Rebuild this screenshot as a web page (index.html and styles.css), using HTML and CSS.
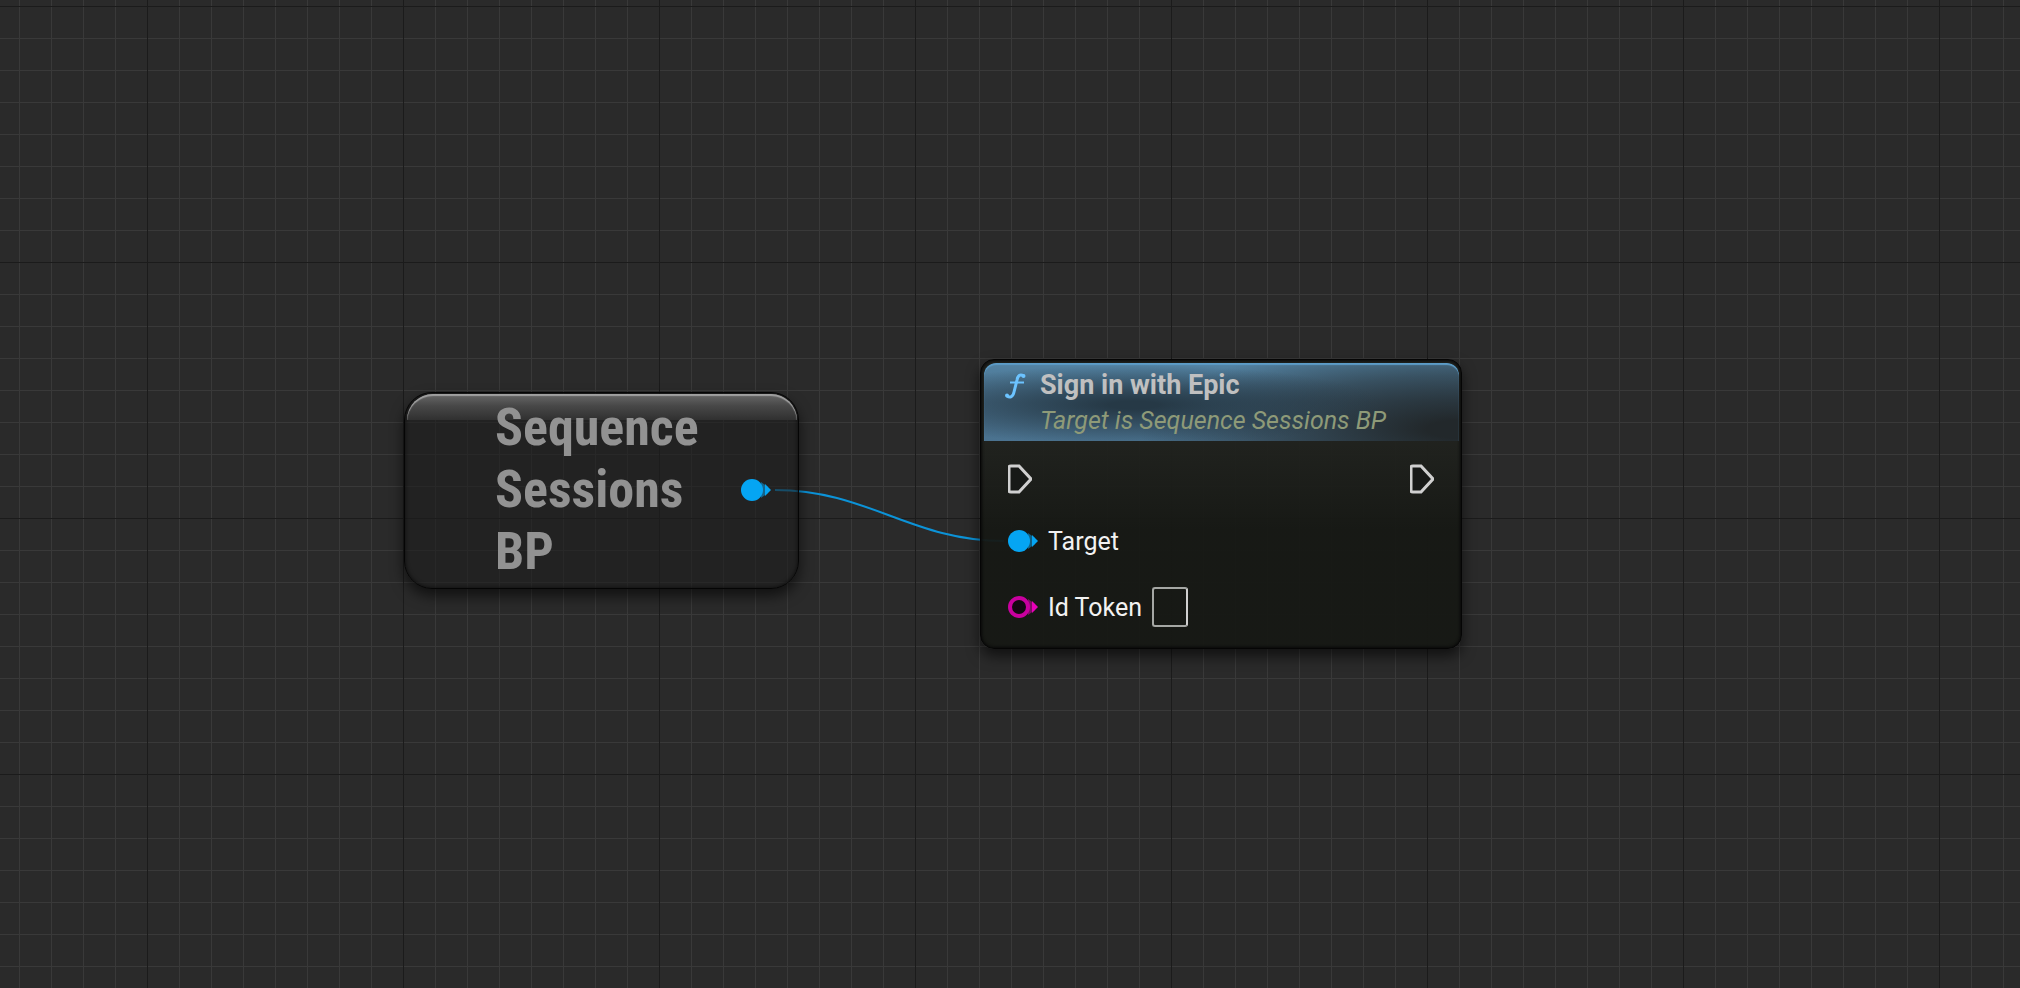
FILE: index.html
```html
<!DOCTYPE html>
<html lang="en">
  <head>
    <meta charset="UTF-8" />
    <meta name="viewport" content="width=device-width, initial-scale=1.0" />
    <title>Blueprint Graph</title>
    <link rel="stylesheet" href="styles.css">
  </head>
  <body>
    <main class="graph">
      <svg class="wires">
        <path d="M775 490 C 868 490, 911 541, 1004 541" />
      </svg>

      <section class="node node-variable">
        <h2 class="variable-name">Sequence Sessions BP</h2>
        <svg class="pin pin-object" width="30" height="22" viewBox="0 0 30 22">
          <circle cx="11" cy="11" r="11" />
          <path d="M20 3 L27 8 V14 L20 19 Z" opacity="0.5" />
          <path d="M24 5 L30 11 L24 17 Z" />
        </svg>
      </section>

      <section class="node node-function">
        <header class="node-header">
          <svg class="icon-function" width="22" height="26" viewBox="0 0 22 26">
            <path class="stem" d="M19 3 C15 1 13 2 12 7 L9 19 C8 24 5 25 2 23" />
            <path class="bar" d="M5 9.500 H19" />
            <circle cx="18.500" cy="3" r="2" />
            <circle cx="2" cy="22.500" r="2" />
          </svg>
          <div>
            <h2 class="title">Sign in with Epic</h2>
            <p class="subtitle">Target is Sequence Sessions BP</p>
          </div>
        </header>
        <div class="pins">
          <div class="row row-exec">
            <svg class="pin pin-exec" width="24" height="30" viewBox="0 0 24 30">
              <path d="M1 3 Q1 2 3 2 H11 L23 15 L11 28 H3 Q1 28 1 27 Z" />
            </svg>
            <svg class="pin pin-exec" width="24" height="30" viewBox="0 0 24 30">
              <path d="M1 3 Q1 2 3 2 H11 L23 15 L11 28 H3 Q1 28 1 27 Z" />
            </svg>
          </div>
          <div class="row">
            <svg class="pin pin-object" width="30" height="22" viewBox="0 0 30 22">
              <circle cx="11" cy="11" r="11" />
              <path d="M20 3 L27 8 V14 L20 19 Z" opacity="0.5" />
              <path d="M24 5 L30 11 L24 17 Z" />
            </svg>
            <span>Target</span>
          </div>
          <div class="row">
            <svg class="pin pin-string" width="30" height="22" viewBox="0 0 30 22">
              <path d="M20 3 L27 8 V14 L20 19 Z" opacity="0.5" />
              <circle cx="11" cy="11" r="9" />
              <path d="M24 5 L30 11 L24 17 Z" />
            </svg>
            <label for="id-token">Id Token</label>
            <input class="token-input" id="id-token" type="text" />
          </div>
        </div>
      </section>
    </main>
  </body>
</html>
```

FILE: styles.css
```css
* {
  box-sizing: border-box;
}
body {
  margin: 0;
  background-color: #2a2a2a;
  font-family: Roboto, "Liberation Sans", sans-serif;
}
h2,
p {
  margin: 0;
}

/* canvas: major lines every 256px, minor lines every 32px */
.graph {
  position: relative;
  min-height: 100vh;
  overflow: hidden;
  background-image:
    linear-gradient(to right, #1b1b1b 1px, transparent 1px),
    linear-gradient(to bottom, #1b1b1b 1px, transparent 1px),
    linear-gradient(to right, #393939 1px, transparent 1px),
    linear-gradient(to bottom, #393939 1px, transparent 1px);
  background-size: 256px 256px, 256px 256px, 32px 32px, 32px 32px;
  background-position: 147px 6px, 147px 6px, 19px 6px, 19px 6px;
}
.wires {
  position: absolute;
  left: 0;
  top: 0;
  width: 100%;
  height: 100%;
}
.wires path {
  fill: none;
  stroke: #0c93d8;
  stroke-width: 2;
}

.node {
  position: absolute;
  border: 1px solid #050505;
}
.node-variable {
  left: 404px;
  top: 392px;
  width: 395px;
  display: flex;
  align-items: center;
  justify-content: space-between;
  padding: 4px 27px 5px 90px;
  border-radius: 28px;
  background-color: rgba(30, 30, 30, 0.6);
  box-shadow: 0 7px 14px rgba(0, 0, 0, 0.6), inset 0 0 4px rgba(0, 0, 0, 0.7);
}
/* glossy top edge */
.node-variable::before {
  content: "";
  position: absolute;
  left: 2px;
  right: 1px;
  top: 1px;
  height: 26px;
  border-radius: 26px 26px 0 0;
  background: linear-gradient(#686868, #484848 45%, #303030);
  box-shadow: inset 0 2px 1px #a0a0a0;
}
.variable-name {
  position: relative;
  width: 220px;
  font-family: "Roboto Condensed", Roboto, sans-serif;
  font-size: 52px;
  line-height: 62px;
  font-weight: 700;
  color: #929292;
}

.node-function {
  left: 980px;
  top: 359px;
  width: 482px;
  border-radius: 14px;
  padding: 3px 2px 0 3px;
  background: linear-gradient(rgba(32, 34, 30, 0.95) 80px, rgba(22, 24, 20, 0.95) 170px);
  box-shadow: 0 7px 14px rgba(0, 0, 0, 0.6), inset 0 0 3px 1px #080808;
}
.node-header {
  display: flex;
  gap: 13px;
  height: 78px;
  padding: 4px 21px;
  border-radius: 12px 12px 0 0;
  background:
    radial-gradient(ellipse 250px 40px at 150px 42px, #263946 10%, rgba(38, 57, 70, 0) 100%),
    radial-gradient(ellipse 320px 90px at 100% 85%, #22282b 10%, rgba(34, 40, 43, 0.5) 60%, rgba(34, 40, 43, 0) 100%),
    linear-gradient(#5484a4, #466b86 50%, #4b7390);
  box-shadow: inset 0 2px 1px #5c9cc7;
}
.icon-function {
  flex: none;
  margin-top: 6px;
  fill: #6cc3ff;
}
.icon-function .stem,
.icon-function .bar {
  fill: none;
  stroke: #6cc3ff;
  stroke-width: 3;
}
.icon-function .bar {
  stroke-width: 2;
}
.title {
  font-size: 27px;
  line-height: 36px;
  font-weight: 700;
  color: #c0c0c0;
}
.subtitle {
  font-size: 25px;
  line-height: 36px;
  font-style: italic;
  white-space: nowrap;
  color: #8e9a78;
}

.pins {
  display: flex;
  flex-direction: column;
  gap: 26px;
  padding: 22px 25px 21px 24px;
  font-size: 25px;
  color: #f2f2f2;
}
.row {
  display: flex;
  align-items: center;
  gap: 10px;
  height: 40px;
}
.row-exec {
  justify-content: space-between;
  height: 32px;
}
.pin {
  flex: none;
}
.pin-object {
  fill: #05a5f3;
}
.pin-exec path {
  fill: #171917;
  stroke: #d0d0d0;
  stroke-width: 3;
}
.pin-string {
  fill: #e800b8;
}
.pin-string circle {
  fill: #140812;
  stroke: #c9009f;
  stroke-width: 4;
}
.token-input {
  width: 36px;
  height: 40px;
  padding: 4px;
  border: 2px solid #a5a7a4;
  border-right-color: #d0d0d0;
  border-radius: 3px;
  background-color: transparent;
  color: #f2f2f2;
  font: inherit;
}
```
